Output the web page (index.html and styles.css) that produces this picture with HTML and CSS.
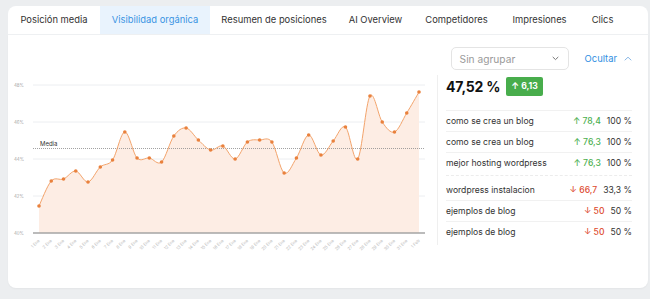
FILE: index.html
```html
<!DOCTYPE html>
<html lang="es">
<head>
<meta charset="utf-8">
<title>Visibilidad orgánica</title>
<link rel="stylesheet" href="styles.css">
</head>
<body>
<div class="app">
  <nav class="tabs">
    <div class="tab tab-pos">Posición media</div>
    <div class="tab tab-vis active">Visibilidad orgánica</div>
    <div class="tab tab-res">Resumen de posiciones</div>
    <div class="tab tab-ai">AI Overview</div>
    <div class="tab tab-comp">Competidores</div>
    <div class="tab tab-imp">Impresiones</div>
    <div class="tab tab-clics">Clics</div>
  </nav>
  <section class="panel">
    <div class="panel-head">
      <div class="select">
        <span>Sin agrupar</span>
        <svg class="chev" width="7" height="5" viewBox="0 0 7 5"><path d="M1 1.2 L3.5 3.6 L6 1.2"/></svg>
      </div>
      <div class="toggle">
        <span>Ocultar</span>
        <svg class="chev chev-up" width="8" height="5" viewBox="0 0 8 5"><path d="M1 4 L4 1.2 L7 4"/></svg>
      </div>
    </div>
    <div class="panel-body">
      <div class="chart">
        <svg id="chart" class="chart-svg" width="429" height="180" viewBox="8 75 429 180">
          <g class="grid">
            <line x1="33" y1="85" x2="425" y2="85"/>
            <line x1="33" y1="122" x2="425" y2="122"/>
            <line x1="33" y1="159" x2="425" y2="159"/>
            <line x1="33" y1="196" x2="425" y2="196"/>
          </g>
          <g class="ylabels">
            <text x="14" y="86.5">48%</text>
            <text x="14" y="123.5">46%</text>
            <text x="14" y="160.5">44%</text>
            <text x="14" y="197.5">42%</text>
            <text x="14" y="234.5">40%</text>
          </g>
          <path id="area" class="area" d=""/>
          <line class="axis" x1="33" y1="233" x2="425" y2="233"/>
          <line class="media-line" x1="33" y1="148.5" x2="425" y2="148.5"/>
          <text class="media-label" x="40" y="145.5">Media</text>
          <path id="line" class="line" d=""/>
          <g id="dots" class="dots"></g>
          <g id="xlabels" class="xlabels"></g>
        </svg>
      </div>
      <aside class="side">
        <div class="total">
          <span class="total-value">47,52 %</span>
          <span class="badge">↑ 6,13</span>
        </div>
        <ul class="rows">
          <li class="row"><span class="name">como se crea un blog</span><span class="delta up">↑ 78,4</span><span class="pct">100 %</span></li>
          <li class="row"><span class="name">como se crea un blog</span><span class="delta up">↑ 76,3</span><span class="pct">100 %</span></li>
          <li class="row"><span class="name">mejor hosting wordpress</span><span class="delta up">↑ 76,3</span><span class="pct">100 %</span></li>
        </ul>
        <ul class="rows rows-down">
          <li class="row"><span class="name">wordpress instalacion</span><span class="delta down">↓ 66,7</span><span class="pct">33,3 %</span></li>
          <li class="row"><span class="name">ejemplos de blog</span><span class="delta down">↓ 50</span><span class="pct">50 %</span></li>
          <li class="row"><span class="name">ejemplos de blog</span><span class="delta down">↓ 50</span><span class="pct">50 %</span></li>
        </ul>
      </aside>
    </div>
  </section>
</div>
<script src="chart.js"></script>
</body>
</html>
```

FILE: styles.css
```css
* { box-sizing: border-box; }
html, body { margin: 0; padding: 0; }
body {
  background: #eceef0;
  font-family: Inter, "Open Sans", "Liberation Sans", sans-serif;
  color: #333;
  width: 650px;
  height: 299px;
  overflow: hidden;
}
.app { padding: 6px 2px 0 8px; }

.tabs {
  display: flex;
  height: 28px;
  background: #fff;
  border-radius: 8px 8px 0 0;
}
.tab {
  line-height: 28px;
  font-size: 9.4px;
  color: #333;
  white-space: nowrap;
  text-align: center;
}
.tab-pos { width: 92px; }
.tab-vis { width: 110px; }
.tab-res { width: 128px; }
.tab-ai { width: 75px; }
.tab-comp { width: 87px; }
.tab-imp { width: 79px; }
.tab-clics { width: 47px; }
.tab.active {
  background: #e9f3fd;
  color: #3a93e3;
}

.panel {
  background: #fff;
  height: 254px;
  border-top: 1px solid #eef0f2;
  border-radius: 0 0 8px 8px;
  box-shadow: 0 1px 2px rgba(0,0,0,0.04);
}
.panel-head {
  display: flex;
  justify-content: flex-end;
  align-items: center;
  padding: 12px 16px 0 0;
  height: 35px;
}
.select {
  width: 118px;
  height: 23px;
  border: 1px solid #e4e4e4;
  border-radius: 5px;
  display: flex;
  align-items: center;
  justify-content: space-between;
  padding: 0 9px 0 8px;
  font-size: 10.2px;
  color: #9a9a9a;
}
.chev { fill: none; stroke: #777; stroke-width: 1; stroke-linecap: round; stroke-linejoin: round; }
.toggle {
  display: flex;
  align-items: center;
  gap: 7px;
  margin-left: 16px;
  font-size: 9.4px;
  color: #2f8fe2;
}
.chev-up { stroke: #8ab8e6; }

.panel-body {
  display: grid;
  grid-template-columns: 429px 1fr;
  margin-top: 5px;
}
.chart-svg { display: block; }
.grid line { stroke: #eceef1; stroke-width: 1; }
.ylabels text { font-size: 4.4px; fill: #a8a8a8; }
.area { fill: #fdede4; }
.axis { stroke: #a5a5a5; stroke-width: 1.3; }
.media-line { stroke: #8a8a8a; stroke-width: 0.8; stroke-dasharray: 1 1; }
.media-label { font-size: 6px; fill: #333; }
.line { fill: none; stroke: #f3a46c; stroke-width: 1; }
.dots circle { fill: #e9813d; }
.xlabels text { font-size: 4.2px; fill: #b8b8b8; text-anchor: end; }

.side {
  border-left: 1px solid #efefef;
  padding: 0 16px 0 8px;
  height: 170px;
}
.total {
  display: flex;
  align-items: center;
  gap: 6px;
  height: 22px;
  margin-bottom: 13px;
}
.total-value {
  font-size: 14px;
  font-weight: 700;
  color: #111;
  letter-spacing: -0.2px;
}
.badge {
  background: #48ad4c;
  color: #fff;
  font-size: 8.6px;
  font-weight: 700;
  height: 19px;
  line-height: 19px;
  padding: 0 5px;
  border-radius: 2px;
}
.rows { list-style: none; margin: 0; padding: 0; }
.row {
  display: flex;
  align-items: center;
  height: 21px;
  border-top: 1px solid #f1f1f1;
  font-size: 8.6px;
  color: #333;
}
.name { flex: 1; white-space: nowrap; }
.delta { font-weight: 500; margin-right: 6px; }
.delta.up { color: #4caf50; }
.delta.down { color: #dd4a30; }
.pct { min-width: 20px; text-align: right; }
.rows-down {
  margin-top: 2px;
  padding-top: 3px;
  border-top: 1px dashed #ececec;
}
.rows-down .row:first-child { border-top: none; }
```

FILE: chart.js
```js
(function () {
  var NS = 'http://www.w3.org/2000/svg';
  var ys = [206,181,179,171,182,167,160,132,158,158,162,136,128,140,150,146,159,142,140,142,173,158,135,155,141,127,159,96,122,132,113,92];
  var x0 = 39, x1 = 419, base = 233;
  var n = ys.length, dx = (x1 - x0) / (n - 1);
  var pts = ys.map(function (y, i) { return [x0 + i * dx, y]; });
  function f(v) { return v.toFixed(2); }
  var d = 'M' + f(pts[0][0]) + ',' + f(pts[0][1]);
  for (var i = 0; i < n - 1; i++) {
    var p0 = pts[Math.max(i - 1, 0)], p1 = pts[i], p2 = pts[i + 1], p3 = pts[Math.min(i + 2, n - 1)];
    var c1x = p1[0] + (p2[0] - p0[0]) / 6, c1y = p1[1] + (p2[1] - p0[1]) / 6;
    var c2x = p2[0] - (p3[0] - p1[0]) / 6, c2y = p2[1] - (p3[1] - p1[1]) / 6;
    d += ' C' + f(c1x) + ',' + f(c1y) + ' ' + f(c2x) + ',' + f(c2y) + ' ' + f(p2[0]) + ',' + f(p2[1]);
  }
  document.getElementById('line').setAttribute('d', d);
  document.getElementById('area').setAttribute('d', d + ' L' + f(x1) + ',' + base + ' L' + f(x0) + ',' + base + ' Z');

  var dots = document.getElementById('dots');
  var labels = document.getElementById('xlabels');
  pts.forEach(function (p, i) {
    var c = document.createElementNS(NS, 'circle');
    c.setAttribute('cx', f(p[0]));
    c.setAttribute('cy', f(p[1]));
    c.setAttribute('r', '1.8');
    dots.appendChild(c);

    var t = document.createElementNS(NS, 'text');
    var lx = p[0] + 1, ly = 241;
    t.setAttribute('x', f(lx));
    t.setAttribute('y', ly);
    t.setAttribute('transform', 'rotate(-45 ' + f(lx) + ' ' + ly + ')');
    t.textContent = i < 31 ? (i + 1) + ' Ene' : '1 Feb';
    labels.appendChild(t);
  });
})();
```
